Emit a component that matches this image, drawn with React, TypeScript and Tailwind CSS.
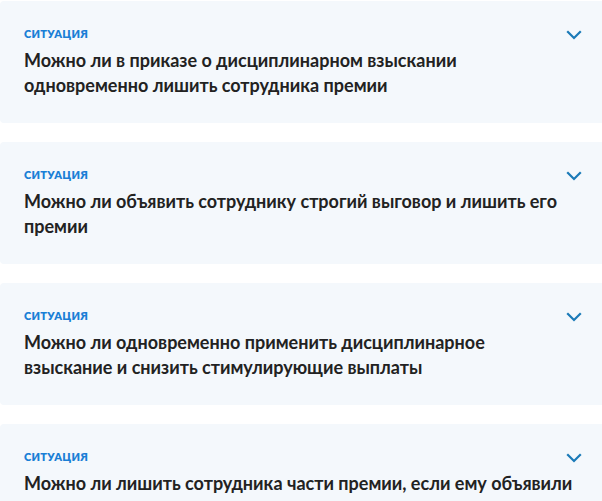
const items = [
  'Можно ли в приказе о дисциплинарном взыскании одновременно лишить сотрудника премии',
  'Можно ли объявить сотруднику строгий выговор и лишить его премии',
  'Можно ли одновременно применить дисциплинарное взыскание и снизить стимулирующие выплаты',
  'Можно ли лишить сотрудника части премии, если ему объявили выговор за нарушение трудовой дисциплины',
]

function Chevron() {
  return (
    <svg width="16" height="10" viewBox="0 0 16 10" fill="none" className="shrink-0 mt-[3px]">
      <path d="M2 2l6 6 6-6" stroke="#1b7ab8" strokeWidth="2.2" strokeLinecap="square" />
    </svg>
  )
}

export default function App() {
  return (
    <div className="w-[602px] h-[501px] overflow-hidden bg-white font-['Lato',sans-serif]">
      <div className="flex flex-col gap-[19px] pt-[1px]">
        {items.map((text, i) => (
          <div key={i} className="bg-[#f4f8fc] rounded-l-[4px] h-[122px] w-[610px] shrink-0 pl-[24px] pr-[27px] pt-[26px]">
            <div className="flex items-center justify-between pr-[1px] h-[13px]">
              <div className="text-[11px] font-extrabold tracking-[0.3px] text-[#1a7fd6] uppercase leading-[13px]">Ситуация</div>
              <Chevron />
            </div>
            <div className="mt-[8px] w-[551px] text-[18px] font-bold leading-[25px] text-[#222222]">{text}</div>
          </div>
        ))}
      </div>
    </div>
  )
}
